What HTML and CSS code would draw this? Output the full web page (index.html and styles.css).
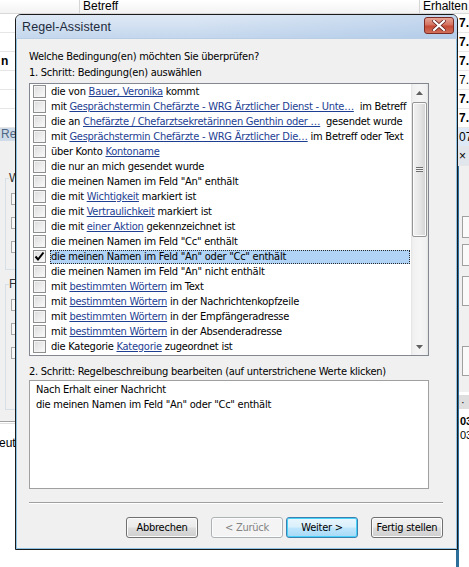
FILE: index.html
```html
<!DOCTYPE html>
<html lang="de">
<head>
<meta charset="utf-8">
<title>Regel-Assistent</title>
<link rel="stylesheet" href="styles.css">
</head>
<body>
<div class="desktop">
  <!-- background: Outlook message list -->
  <div class="bg-list">
    <div class="bg-head">
      <span class="bg-col c1"></span>
      <span class="bg-col c2">Betreff</span>
      <span class="bg-col c3">Erhalten</span>
    </div>
    <div class="bg-row"><span class="bg-date">7.2</span></div>
    <div class="bg-row"><span class="bg-date">7.2</span></div>
    <div class="bg-row"><span class="bg-left">n</span><span class="bg-date">7.2</span></div>
    <div class="bg-row"><span class="bg-date light">7.2</span></div>
    <div class="bg-row"><span class="bg-date">7.2</span></div>
    <div class="bg-row"><span class="bg-date">7.2</span></div>
    <div class="bg-row sel"><span class="bg-date light">07.</span></div>
    <div class="bg-row bar"><span class="bg-date light">×</span></div>
  </div>

  <!-- background: Regeln und Benachrichtigungen -->
  <div class="bg-dlg-left">
    <div class="bg-dlg-title">Re</div>
    <div class="bg-group g1"><span class="bg-legend">W</span>
      <span class="bg-box"></span><span class="bg-box"></span><span class="bg-box"></span>
    </div>
    <div class="bg-group g2"><span class="bg-legend">F</span>
      <span class="bg-box"></span><span class="bg-box"></span><span class="bg-box"></span>
    </div>
  </div>
  <div class="bg-low-left"><span>eut</span></div>

  <div class="bg-dlg-right">
    <span class="bg-rbox r1"></span>
    <span class="bg-rbox r2"></span>
    <span class="bg-rbox r3"></span>
    <span class="bg-rbox r4"></span>
  </div>
  <div class="bg-low-right">
    <div class="bg-low-bar">·</div>
    <div class="bg-low-row b">03</div>
    <div class="bg-low-row">03</div>
  </div>

  <!-- the wizard dialog -->
  <div class="dialog">
    <div class="titlebar">
      <span class="title">Regel-Assistent</span>
      <span class="close">
        <svg width="14" height="11" viewBox="0 0 14 11">
          <path d="M2 1 L12 10 M12 1 L2 10" stroke="#5a1b1b" stroke-width="3.6" stroke-linecap="square"/>
          <path d="M2 1 L12 10 M12 1 L2 10" stroke="#ffffff" stroke-width="2.2" stroke-linecap="square"/>
        </svg>
      </span>
    </div>
    <div class="client">
      <p class="label q">Welche Bedingung(en) möchten Sie überprüfen?</p>
      <p class="label">1. Schritt: Bedingung(en) auswählen</p>
      <div class="listbox">
        <ul class="rows">
          <li class="row"><span class="cb"></span><span class="txt">die von <a>Bauer, Veronika</a> kommt</span></li>
          <li class="row"><span class="cb"></span><span class="txt">mit <a>Gesprächstermin Chefärzte - WRG Ärztlicher Dienst - Unte…</a>&nbsp; im Betreff</span></li>
          <li class="row"><span class="cb"></span><span class="txt">die an <a>Chefärzte / Chefarztsekretärinnen Genthin oder …</a>&nbsp; gesendet wurde</span></li>
          <li class="row"><span class="cb"></span><span class="txt">mit <a>Gesprächstermin Chefärzte - WRG Ärztlicher Die…</a> im Betreff oder Text</span></li>
          <li class="row"><span class="cb"></span><span class="txt">über Konto <a>Kontoname</a></span></li>
          <li class="row"><span class="cb"></span><span class="txt">die nur an mich gesendet wurde</span></li>
          <li class="row"><span class="cb"></span><span class="txt">die meinen Namen im Feld "An" enthält</span></li>
          <li class="row"><span class="cb"></span><span class="txt">die mit <a>Wichtigkeit</a> markiert ist</span></li>
          <li class="row"><span class="cb"></span><span class="txt">die mit <a>Vertraulichkeit</a> markiert ist</span></li>
          <li class="row"><span class="cb"></span><span class="txt">die mit <a>einer Aktion</a> gekennzeichnet ist</span></li>
          <li class="row"><span class="cb"></span><span class="txt">die meinen Namen im Feld "Cc" enthält</span></li>
          <li class="row selected"><span class="cb checked"><svg width="11" height="11" viewBox="0 0 11 11"><path d="M1.5 5.5 L4 8.5 L9.5 1.5" fill="none" stroke="#000" stroke-width="2"/></svg></span><span class="txt">die meinen Namen im Feld "An" oder "Cc" enthält</span></li>
          <li class="row"><span class="cb"></span><span class="txt">die meinen Namen im Feld "An" nicht enthält</span></li>
          <li class="row"><span class="cb"></span><span class="txt">mit <a>bestimmten Wörtern</a> im Text</span></li>
          <li class="row"><span class="cb"></span><span class="txt">mit <a>bestimmten Wörtern</a> in der Nachrichtenkopfzeile</span></li>
          <li class="row"><span class="cb"></span><span class="txt">mit <a>bestimmten Wörtern</a> in der Empfängeradresse</span></li>
          <li class="row"><span class="cb"></span><span class="txt">mit <a>bestimmten Wörtern</a> in der Absenderadresse</span></li>
          <li class="row"><span class="cb"></span><span class="txt">die Kategorie <a>Kategorie</a> zugeordnet ist</span></li>
        </ul>
        <div class="scrollbar">
          <span class="arrow up"><svg width="7" height="4" viewBox="0 0 7 4"><path d="M0 4 L3.5 0 L7 4 Z" fill="#606060"/></svg></span>
          <span class="thumb"><span class="grip"></span></span>
          <span class="track-rest"></span>
          <span class="arrow down"><svg width="7" height="4" viewBox="0 0 7 4"><path d="M0 0 L3.5 4 L7 0 Z" fill="#606060"/></svg></span>
        </div>
      </div>
      <p class="label step2">2. Schritt: Regelbeschreibung bearbeiten (auf unterstrichene Werte klicken)</p>
      <div class="desc">
        <div>Nach Erhalt einer Nachricht</div>
        <div>die meinen Namen im Feld "An" oder "Cc" enthält</div>
      </div>
      <div class="sep"></div>
      <div class="buttons">
        <span class="btn">Abbrechen</span>
        <span class="btn disabled">&lt; Zurück</span>
        <span class="btn default">Weiter &gt;</span>
        <span class="btn">Fertig stellen</span>
      </div>
    </div>
  </div>
</div>
</body>
</html>
```

FILE: styles.css
```css
* { box-sizing: border-box; }
html, body { margin: 0; padding: 0; }
body {
  width: 469px;
  height: 567px;
  overflow: hidden;
  background: #ffffff;
  font-family: "DejaVu Sans Condensed", "DejaVu Sans", "Liberation Sans", sans-serif;
  font-size: 11px;
  letter-spacing: -0.25px;
  color: #000;
}
.desktop { position: relative; width: 469px; height: 567px; overflow: hidden; }

/* ---------- background message list ---------- */
.bg-list { position: absolute; left: 0; top: 0; width: 469px; letter-spacing: 0; }
.bg-head {
  display: flex;
  height: 14px;
  border-bottom: 1px solid #d8d8d8;
  background: linear-gradient(#ffffff, #f3f3f3);
  font-family: "Liberation Sans", sans-serif;
  font-size: 12px;
  line-height: 13px;
}
.bg-col { border-right: 1px solid #d5d5d5; padding-left: 3px; }
.bg-col.c1 { width: 80px; }
.bg-col.c2 { width: 340px; }
.bg-col.c3 { flex: 1; border-right: 0; }
.bg-row {
  position: relative;
  height: 19px;
  border-bottom: 1px solid #e6e6e6;
  font-family: "Liberation Sans", sans-serif;
  font-weight: bold;
  font-size: 12px;
  line-height: 18px;
}
.bg-row.sel { background: #dde9f6; }
.bg-row.bar { background: #e1e6ec; }
.bg-left { position: absolute; left: 1px; top: 0; }
.bg-date { position: absolute; left: 459px; top: 0; }
.bg-date.light { font-weight: normal; }

.bg-dlg-left {
  position: absolute;
  left: -20px; top: 128px;
  width: 35px; height: 294px;
  background: #f0f0f0;
  border-bottom: 1px solid #a0a0a0;
  letter-spacing: 0;
}
.bg-dlg-title {
  height: 13px;
  background: #cfdbe8;
  color: #4f6784;
  font-family: "Liberation Sans", sans-serif;
  font-size: 12px;
  line-height: 13px;
  padding-left: 21px;
}
.bg-group {
  position: relative;
  margin-left: 25px;
  border: 1px solid #d5dfe5;
  border-right: 0;
  display: flex;
  flex-direction: column;
  gap: 12px;
  padding: 14px 0 0 5px;
}
.bg-group.g1 { margin-top: 37px; height: 92px; }
.bg-group.g2 { margin-top: 14px; height: 126px; }
.bg-legend {
  position: absolute;
  top: -7px; left: 3px;
  background: #f0f0f0;
  font-family: "Liberation Sans", sans-serif;
  font-size: 12px;
  line-height: 12px;
  color: #333;
}
.bg-box {
  width: 12px; height: 12px;
  border: 1px solid #a8a8a8;
  background: #f8f8f8;
}
.bg-low-left {
  position: absolute; left: 0; top: 423px; width: 15px; height: 40px;
  border-top: 1px solid #e0e0e0;
  font-family: "Liberation Sans", sans-serif;
  font-size: 12px;
  letter-spacing: 0;
}
.bg-low-left span { position: absolute; left: -1px; top: 12px; }

.bg-dlg-right {
  position: absolute;
  left: 456px; top: 166px;
  width: 20px; height: 226px;
  background: #f0f0f0;
  border-left: 3px solid #2b6f9a;
}
.bg-rbox {
  position: absolute;
  left: 3px; width: 20px;
  border: 1px solid #a0a0a0;
  background: #fafafa;
}
.bg-rbox.r1 { top: 50px; height: 22px; }
.bg-rbox.r2 { top: 78px; height: 22px; }
.bg-rbox.r3 { top: 110px; height: 30px; }
.bg-rbox.r4 { top: 180px; height: 30px; }
.bg-low-right {
  position: absolute;
  left: 456px; top: 392px;
  width: 20px; height: 175px;
  border-left: 3px solid #2b6f9a;
  font-family: "Liberation Sans", sans-serif;
  font-size: 11px;
  letter-spacing: 0;
}
.bg-low-bar { height: 14px; margin-top: 3px; background: #dedede; line-height: 14px; padding-left: 2px; }
.bg-low-row { height: 14px; line-height: 14px; padding-left: 1px; }
.bg-low-row.b { font-weight: bold; margin-top: 5px; }

/* ---------- wizard dialog ---------- */
.dialog {
  position: absolute;
  left: 15px; top: 14px;
  width: 443px; height: 536px;
  border: 1px solid #1b1b1b;
  border-radius: 6px 6px 0 0;
  background: #f0f0f0;
  box-shadow: inset 0 0 0 1px #8fc3e6;
  display: flex;
  flex-direction: column;
  overflow: hidden;
}
.titlebar {
  height: 24px;
  flex: none;
  display: flex;
  align-items: center;
  justify-content: space-between;
  padding: 0 3px 0 6px;
  background:
    linear-gradient(90deg, rgba(255,255,255,0) 40%, rgba(150,185,225,0.35) 100%),
    linear-gradient(#dfe9f5, #c4d7ed);
  border-bottom: 1px solid #b9cde4;
}
.title {
  font-family: "Liberation Sans", sans-serif;
  font-size: 12.5px;
  color: #1e2b3c;
  letter-spacing: 0.1px;
}
.close {
  width: 30px; height: 17px;
  margin-top: -2px;
  border: 1px solid #7a2b24;
  border-radius: 3px;
  background: linear-gradient(#e7a596 0%, #d47261 45%, #c44a35 55%, #d0705a 100%);
  display: flex;
  align-items: center;
  justify-content: center;
}
.client {
  flex: 1;
  padding: 10px 13px 0 12px;
  margin: 0 1px 1px 1px;
  display: flex;
  flex-direction: column;
}
.label {
  margin: 0;
  height: 15px;
  line-height: 15px;
  white-space: nowrap;
}
.label.q { margin-bottom: 1px; }
.listbox {
  margin-top: 3px;
  width: 400px;
  height: 273px;
  border: 1px solid #828790;
  background: #fff;
  display: flex;
  flex: none;
}
.rows {
  list-style: none;
  margin: 0;
  padding: 0;
  flex: 1;
  min-width: 0;
  overflow: hidden;
}
.row {
  height: 15px;
  display: flex;
  align-items: center;
  padding-left: 3px;
  white-space: nowrap;
}
.cb {
  width: 13px; height: 13px;
  flex: none;
  border: 1px solid #8e8f8f;
  background: linear-gradient(135deg, #dcdcdc, #fbfbfb);
  box-shadow: inset 0 0 0 1px #f4f4f4;
  display: flex;
  align-items: center;
  justify-content: center;
}
.txt {
  margin-left: 4px;
  line-height: 15px;
  height: 15px;
  padding: 0 1px;
}
.row.selected .txt {
  flex: 1;
  margin-right: 1px;
  background: #b1d3f5;
  outline: 1px dotted #2a2a2a;
  outline-offset: -1px;
  line-height: 14px;
  height: 14px;
}
a { color: #1d3e93; text-decoration: underline; }

.scrollbar {
  width: 17px;
  flex: none;
  display: flex;
  flex-direction: column;
  align-items: center;
  background: linear-gradient(90deg, #e3e3e3 0, #f1f1f1 2px, #f5f5f5 50%, #f1f1f1 15px, #e3e3e3 17px);
}
.arrow { height: 17px; flex: none; display: flex; align-items: center; justify-content: center; }
.thumb {
  width: 15px;
  height: 135px;
  margin-top: 1px;
  border: 1px solid #959595;
  border-radius: 2px;
  background: linear-gradient(90deg, #f2f2f2, #e6e6e6 50%, #d4d4d4);
  box-shadow: inset 0 0 0 1px #fbfbfb;
  display: flex;
  align-items: center;
  justify-content: center;
}
.grip {
  width: 7px; height: 5px;
  background: repeating-linear-gradient(#6e6e6e 0 1px, #f4f4f4 1px 2px);
}
.track-rest { flex: 1; }

.step2 { margin-top: 8px; }
.desc {
  margin-top: 1px;
  width: 400px;
  height: 109px;
  border: 1px solid #a0a0a0;
  background: #fff;
  padding: 1px 6px;
  line-height: 15px;
}
.sep {
  margin-top: 13px;
  height: 2px;
  border-top: 1px solid #a0a0a0;
  border-bottom: 1px solid #ffffff;
}
.buttons {
  margin-top: 13px;
  display: flex;
  justify-content: flex-end;
}
.btn {
  width: 72px;
  height: 21px;
  margin-left: 13px;
  border: 1px solid #707070;
  border-radius: 3px;
  background: linear-gradient(#f2f2f2 0%, #ebebeb 48%, #dddddd 52%, #cfcfcf 100%);
  box-shadow: inset 0 0 0 1px #fcfcfc;
  display: flex;
  align-items: center;
  justify-content: center;
  white-space: nowrap;
  font-size: 11px;
}
.btn.disabled {
  border-color: #adb2b5;
  background: #f4f4f4;
  color: #838383;
}
.btn.default {
  margin-left: 3px;
  border-color: #3c7fb1;
  background: linear-gradient(#eaf6fd 0%, #d9f0fc 48%, #bee6fd 52%, #a7d9f5 100%);
  box-shadow: inset 0 0 0 1px #48d1f6;
}
```
